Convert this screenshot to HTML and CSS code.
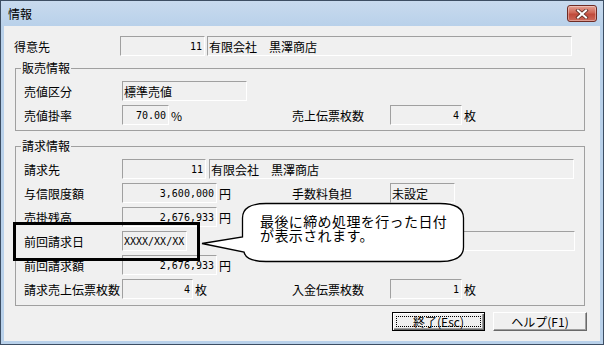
FILE: index.html
```html
<!DOCTYPE html>
<html lang="ja">
<head>
    <meta charset="UTF-8">
    <title>情報</title>
    <link rel="stylesheet" href="styles.css">
</head>
<body>
    <div class="window">
        <div class="titlebar">
            <span class="title">情報</span>
            <button class="close">
                <svg width="14" height="10" viewBox="0 0 14 10">
                    <path d="M3 1.5 L11 8.5 M11 1.5 L3 8.5" stroke="#5a2a24" stroke-width="3.6" stroke-linecap="square"/>
                    <path d="M3 1.5 L11 8.5 M11 1.5 L3 8.5" stroke="#fff" stroke-width="2" stroke-linecap="square"/>
                </svg>
            </button>
        </div>
        <div class="client">
            <div class="row first">
                <span class="lbl wide">得意先</span>
                <span class="box num w85">11</span>
                <span class="box name">有限会社　黒澤商店</span>
            </div>

            <fieldset class="group">
                <legend>販売情報</legend>
                <div class="row">
                    <span class="lbl">売値区分</span>
                    <span class="box w125">標準売値</span>
                </div>
                <div class="row">
                    <div class="half">
                        <span class="lbl">売値掛率</span>
                        <span class="box num w47">70.00</span><span class="unit">%</span>
                    </div>
                    <span class="lbl">売上伝票枚数</span>
                    <span class="box num w72">4</span><span class="unit">枚</span>
                </div>
            </fieldset>

            <fieldset class="group second">
                <legend>請求情報</legend>
                <div class="row">
                    <span class="lbl">請求先</span>
                    <span class="box num w84">11</span>
                    <span class="box name2">有限会社　黒澤商店</span>
                </div>
                <div class="row">
                    <div class="half">
                        <span class="lbl">与信限度額</span>
                        <span class="box num w95">3,600,000</span><span class="unit">円</span>
                    </div>
                    <span class="lbl">手数料負担</span>
                    <span class="box w65">未設定</span>
                </div>
                <div class="row">
                    <div class="half">
                        <span class="lbl">売掛残高</span>
                        <span class="box num w95">2,676,933</span><span class="unit">円</span>
                    </div>
                </div>
                <div class="row">
                    <div class="half">
                        <span class="lbl">前回請求日</span>
                        <span class="box mono w65">XXXX/XX/XX</span>
                    </div>
                    <span class="lbl"></span>
                    <span class="box w185"></span>
                </div>
                <div class="row">
                    <div class="half">
                        <span class="lbl">前回請求額</span>
                        <span class="box num w95">2,676,933</span><span class="unit">円</span>
                    </div>
                </div>
                <div class="row">
                    <div class="half">
                        <span class="lbl">請求売上伝票枚数</span>
                        <span class="box num w71">4</span><span class="unit">枚</span>
                    </div>
                    <span class="lbl">入金伝票枚数</span>
                    <span class="box num w72">1</span><span class="unit">枚</span>
                </div>
            </fieldset>

            <div class="actions">
                <button class="btn default"><span class="focus">終了(Esc)</span></button>
                <button class="btn">ヘルプ(F1)</button>
            </div>
        </div>

        <!-- annotation drawn over the dialog -->
        <div class="highlight"></div>
        <div class="callout">
            <svg class="bubble" width="266" height="62" viewBox="0 0 266 62">
                <path d="M42.5 35 L42.5 16 Q42.5 1.5 66 1.5 L240 1.5 Q263.5 1.5 263.5 16 L263.5 45 Q263.5 59.5 240 59.5 L66 59.5 Q46 59.5 44 50 L2 41.5 Z"
                      fill="#fff" stroke="#000" stroke-width="1.3"/>
            </svg>
            <p class="callout-text">最後に締め処理を行った日付<br>が表示されます。</p>
        </div>
    </div>
</body>
</html>
```

FILE: styles.css
```css
body {
    margin: 0;
    font-family: "Noto Sans CJK JP", sans-serif;
    font-size: 12px;
    color: #000;
}
.window {
    position: relative;
    width: 604px;
    height: 345px;
    box-sizing: border-box;
    border: 1px solid #3d4e63;
    background: #b9d1ea;
    padding: 0 3px 3px;
    display: flex;
    flex-direction: column;
}
.titlebar {
    height: 25px;
    margin: 0 -3px;
    padding: 0 6px 0 7px;
    display: flex;
    align-items: center;
    justify-content: space-between;
    background: linear-gradient(#c8daee, #b9d1ea);
}
.close {
    width: 30px;
    height: 17px;
    padding: 0;
    display: flex;
    align-items: center;
    justify-content: center;
    border: 1px solid #6e2b24;
    border-radius: 3px;
    background: linear-gradient(#e4a193, #cf6656 45%, #c04a3b 55%, #cd6a5b);
    box-shadow: inset 0 0 0 1px rgba(255, 255, 255, 0.35);
}
.client {
    flex: 1;
    background: #f0f0f0;
    padding-top: 8px;
}
.row {
    display: flex;
    align-items: center;
    height: 24px;
}
.row.first {
    padding-left: 10px;
}
.lbl {
    width: 98px;
    flex-shrink: 0;
    white-space: nowrap;
}
.lbl.wide {
    width: 106px;
}
.half {
    display: flex;
    align-items: center;
    width: 268px;
    flex-shrink: 0;
}
.box {
    display: flex;
    align-items: center;
    height: 20px;
    box-sizing: border-box;
    border: 1px solid;
    border-color: #a0a0a0 #fff #fff #a0a0a0;
    padding: 0 1px;
    white-space: nowrap;
    overflow: hidden;
    flex-shrink: 0;
}
.num {
    justify-content: flex-end;
    padding-right: 2px;
    font-family: "DejaVu Sans Mono", monospace;
    font-size: 10px;
}
.mono {
    font-family: "DejaVu Sans Mono", monospace;
    font-size: 10px;
}
.unit {
    margin-left: 2px;
}
.w47 { width: 47px; }
.w65 { width: 65px; }
.w71 { width: 71px; }
.w72 { width: 72px; }
.w84 { width: 84px; }
.w85 { width: 85px; }
.w95 { width: 95px; }
.w125 { width: 125px; }
.w185 { width: 185px; }
.name {
    width: 365px;
    margin-left: 2px;
}
.name2 {
    width: 365px;
    margin-left: 3px;
}
.group {
    width: 570px;
    box-sizing: border-box;
    margin: 3px 0 0 11px;
    padding: 4px 0 3px 8px;
    border: 1px solid #a0a0a0;
    min-inline-size: 0;
}
.group legend {
    padding: 0 1px;
    margin-left: -3px;
    line-height: 14px;
}
.group.second {
    margin-top: 8px;
    padding-bottom: 4px;
}
.actions {
    display: flex;
    justify-content: flex-end;
    gap: 8px;
    margin-top: 6px;
    padding-right: 13px;
}
.btn {
    width: 93px;
    height: 19px;
    padding: 0;
    font-family: "Noto Sans CJK JP", sans-serif;
    font-size: 12px;
    color: #000;
    background: #f0f0f0;
    border: 1px solid;
    border-color: #fff #696969 #696969 #fff;
    box-shadow: inset -1px -1px 0 #a0a0a0;
}
.btn + .btn {
    width: 94px;
}
.btn.default {
    border: 1px solid #000;
    padding: 3px;
    box-shadow: inset 1px 1px 0 #fff, inset -1px -1px 0 #696969, inset -2px -2px 0 #a0a0a0;
}
.focus {
    display: flex;
    align-items: center;
    justify-content: center;
    height: 100%;
    box-sizing: border-box;
    border: 1px dotted #000;
}
.highlight {
    position: absolute;
    left: 12px;
    top: 221px;
    width: 187px;
    height: 39px;
    box-sizing: border-box;
    border: 3px solid #000;
}
.callout {
    position: absolute;
    left: 199px;
    top: 201px;
    width: 266px;
    height: 62px;
}
.bubble {
    position: absolute;
    left: 0;
    top: 0;
}
.callout-text {
    position: relative;
    margin: 0;
    padding: 12px 0 0 60px;
    font-size: 14px;
    line-height: 14px;
    letter-spacing: 0.4px;
    white-space: nowrap;
}
```
